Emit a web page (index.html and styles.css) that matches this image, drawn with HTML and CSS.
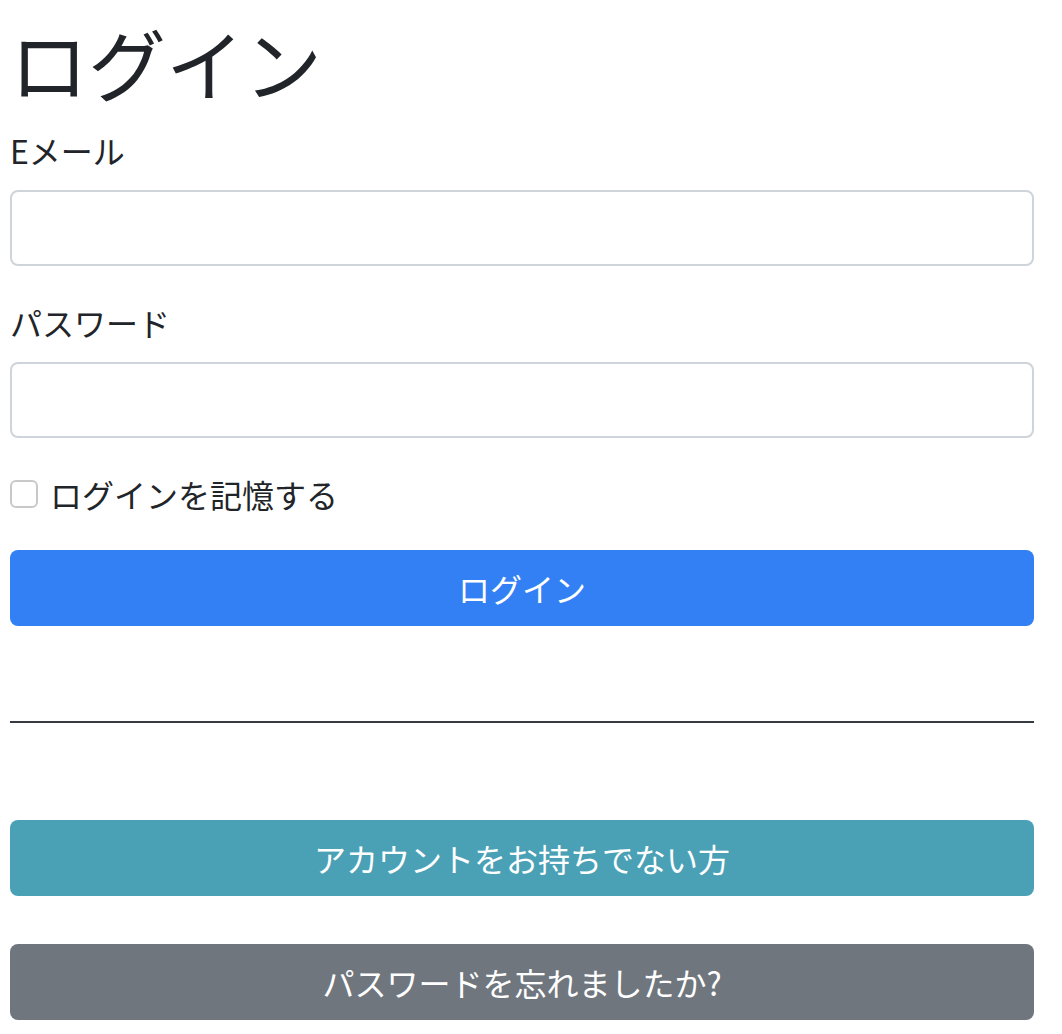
FILE: index.html
```html
<!DOCTYPE html>
<html lang="ja">
<head>
    <meta charset="UTF-8">
    <meta name="viewport" content="width=device-width, initial-scale=1.0">
    <title>ログイン</title>
    <link rel="stylesheet" href="styles.css">
</head>
<body>
    <div class="container">
        <h1>ログイン</h1>
        <form>
            <div class="form-group">
                <label for="email">Eメール</label>
                <input type="email" id="email" class="form-control">
            </div>
            <div class="form-group">
                <label for="password">パスワード</label>
                <input type="password" id="password" class="form-control">
            </div>
            <div class="form-group form-check">
                <input type="checkbox" id="remember" class="check-input">
                <label for="remember" class="check-label">ログインを記憶する</label>
            </div>
            <button type="submit" class="btn btn-primary">ログイン</button>
        </form>
        <hr>
        <button type="button" class="btn btn-info">アカウントをお持ちでない方</button>
        <button type="button" class="btn btn-secondary">パスワードを忘れましたか?</button>
    </div>
</body>
</html>
```

FILE: styles.css
```css
body {
    margin: 0;
    font-family: "Noto Sans CJK JP", "Noto Sans", sans-serif;
    color: #212529;
    background: #ffffff;
}

.container {
    width: 1024px;
    padding: 14px 28px 0 10px;
}

h1 {
    font-size: 78px;
    font-weight: 400;
    line-height: 96px;
    margin: 0 0 16px;
}

.form-group {
    margin-bottom: 32px;
}

label {
    display: block;
    font-size: 32px;
    line-height: 48px;
    margin-bottom: 16px;
}

.form-control {
    display: block;
    box-sizing: border-box;
    width: 100%;
    height: 76px;
    margin: 0;
    border: 2px solid #ced4da;
    border-radius: 8px;
    background: #ffffff;
}

.form-check {
    display: flex;
    align-items: center;
    height: 48px;
}

.check-input {
    appearance: none;
    -webkit-appearance: none;
    box-sizing: border-box;
    width: 28px;
    height: 28px;
    margin: 0 12px 0 0;
    border: 2px solid #c8c8c8;
    border-radius: 6px;
    background: #ffffff;
}

.check-label {
    margin: 0;
}

.btn {
    display: block;
    box-sizing: border-box;
    width: 100%;
    height: 76px;
    padding: 0;
    border: none;
    border-radius: 8px;
    font-family: inherit;
    font-size: 32px;
    color: #ffffff;
    cursor: pointer;
}

.btn-primary {
    background: #3380f4;
}

.btn-info {
    background: #4aa1b6;
}

.btn-secondary {
    background: #6f767e;
    margin-top: 48px;
}

hr {
    height: 0;
    margin: 95px 0 97px;
    border: none;
    border-top: 2px solid #343a40;
}
```
